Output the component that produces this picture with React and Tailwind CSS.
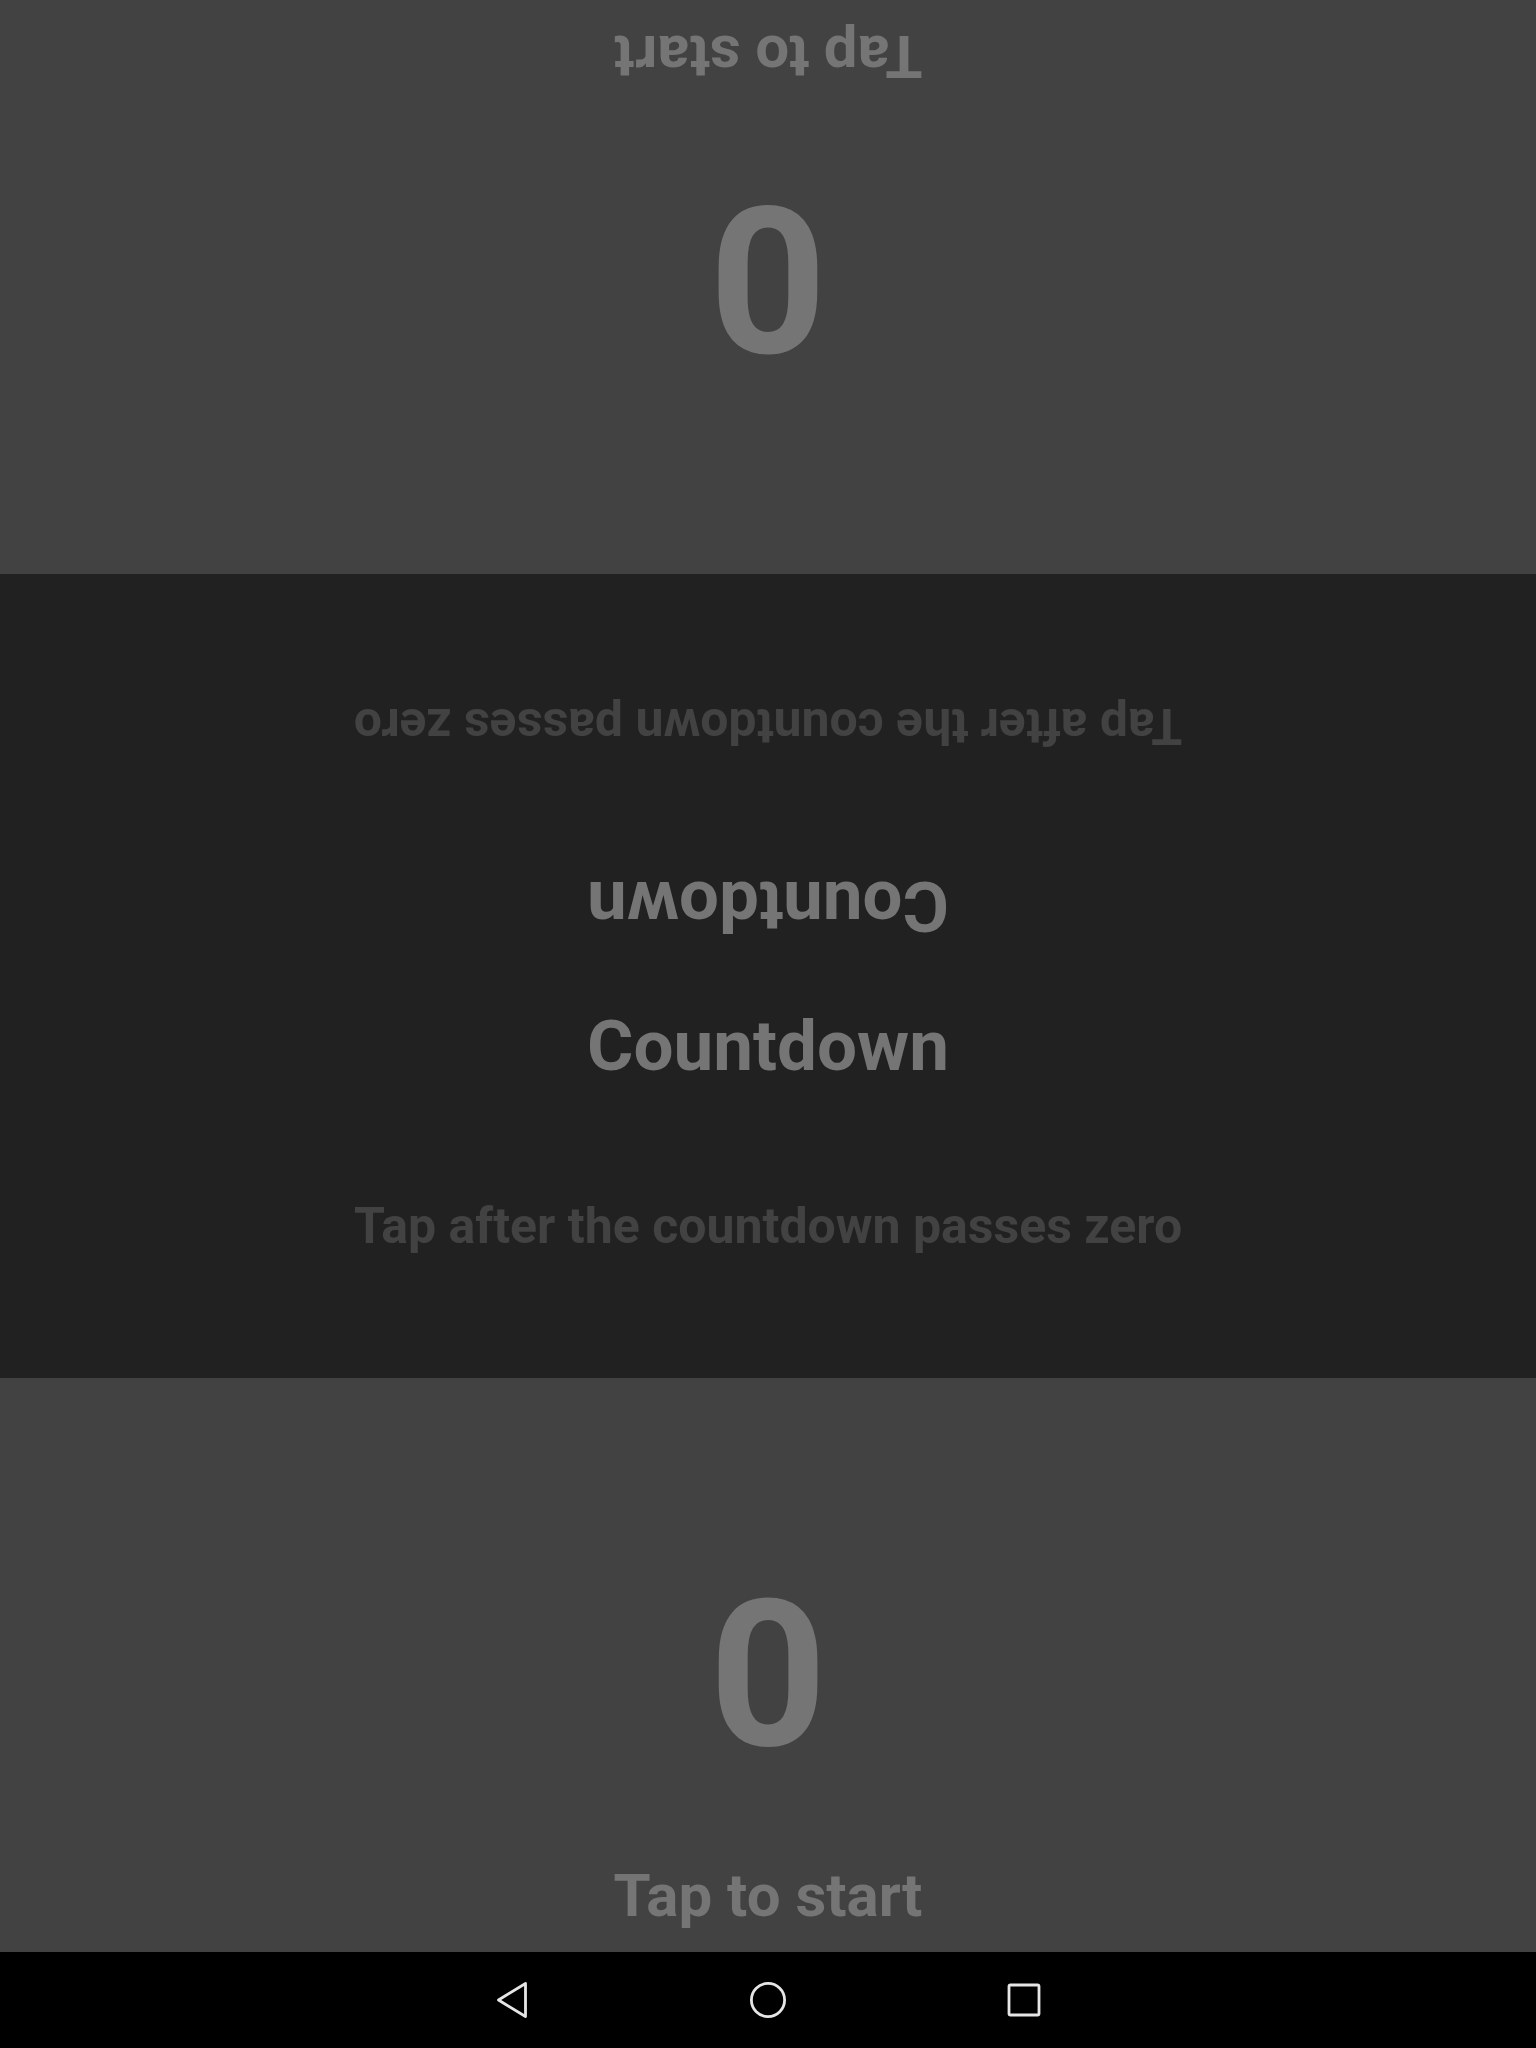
const Player = ({ flipped }) => (
  <div
    className={`h-[574px] bg-[#424242] flex flex-col items-center justify-end pb-[26px] ${
      flipped ? 'rotate-180' : ''
    }`}
  >
    <div className="text-[205px] leading-none font-bold text-[#757575]">0</div>
    <div className="mt-[88px] text-[60px] leading-none font-bold text-[#757575]">Tap to start</div>
  </div>
);

const Info = ({ flipped }) => (
  <div className={`h-[402px] flex flex-col items-center pt-[34px] ${flipped ? 'rotate-180' : ''}`}>
    <div className="text-[71px] leading-none font-bold text-[#757575]">Countdown</div>
    <div className="mt-[120px] text-[50px] leading-none font-bold text-[#424242]">
      Tap after the countdown passes zero
    </div>
  </div>
);

export default function App() {
  return (
    <div className="w-[1536px] h-[2048px] flex flex-col font-[Roboto,sans-serif] overflow-hidden">
      <Player flipped />
      <div className="h-[804px] bg-[#212121] flex flex-col">
        <Info flipped />
        <Info />
      </div>
      <Player />

      {/* barra de navegação do android */}
      <div className="h-[96px] bg-black flex justify-center items-center">
        <div className="w-[256px] flex justify-center">
          <svg width="40" height="40" viewBox="0 0 40 40" fill="none" stroke="#e6e6e6" strokeWidth="2.8" strokeLinejoin="round">
            <path d="M33.5 3.5 L6.5 20 L33.5 36.5 Z" />
          </svg>
        </div>
        <div className="w-[256px] flex justify-center">
          <svg width="40" height="40" viewBox="0 0 40 40" fill="none" stroke="#e6e6e6" strokeWidth="2.8">
            <circle cx="20" cy="20" r="16.6" />
          </svg>
        </div>
        <div className="w-[256px] flex justify-center">
          <svg width="40" height="40" viewBox="0 0 40 40" fill="none" stroke="#e6e6e6" strokeWidth="2.8">
            <rect x="5" y="5" width="30" height="30" rx="1.5" />
          </svg>
        </div>
      </div>
    </div>
  );
}
